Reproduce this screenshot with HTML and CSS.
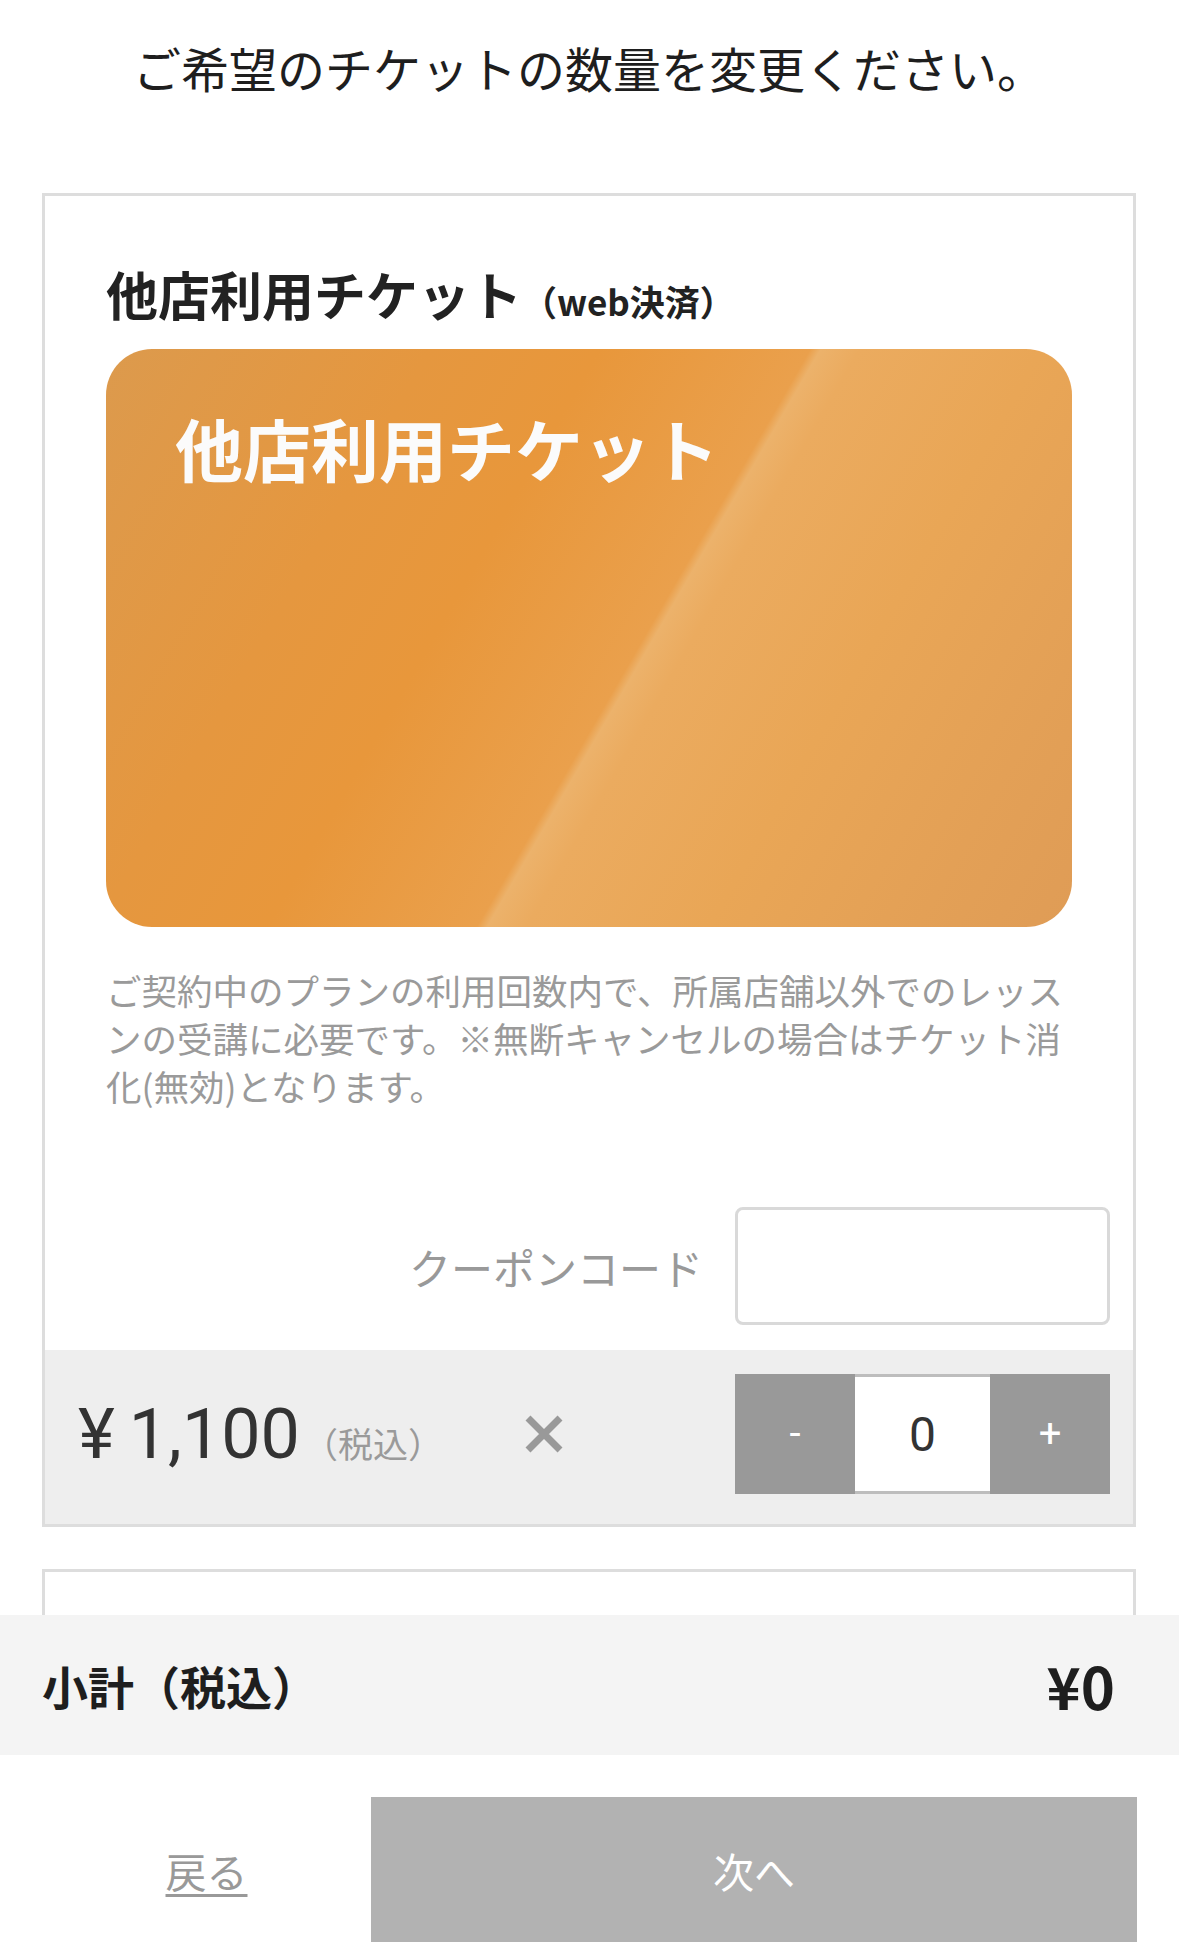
FILE: index.html
```html
<!DOCTYPE html>
<html lang="ja">
<head>
<meta charset="utf-8">
<title>チケット数量の変更</title>
<link rel="stylesheet" href="styles.css">
</head>
<body>
<main class="page">
  <p class="lead">ご希望のチケットの数量を変更ください。</p>

  <section class="ticket">
    <div class="ticket-body">
      <h2 class="ticket-title">他店利用チケット<span class="ticket-sub">（web決済）</span></h2>
      <div class="ticket-card">
        <span class="ticket-card-name">他店利用チケット</span>
      </div>
      <p class="ticket-desc">ご契約中のプランの利用回数内で、所属店舗以外でのレッスンの受講に必要です。※無断キャンセルの場合はチケット消化(無効)となります。</p>
    </div>
    <div class="coupon">
      <label class="coupon-label" for="coupon">クーポンコード</label>
      <input class="coupon-input" id="coupon" type="text">
    </div>
    <div class="price-row">
      <div class="price">
        <span class="price-yen">¥</span><span class="price-amount">1,100</span>
        <span class="price-tax">（税込）</span>
      </div>
      <svg class="times" width="38" height="38" viewBox="0 0 38 38" aria-hidden="true">
        <path d="M3 3 L35 35 M35 3 L3 35" stroke="#999" stroke-width="7" fill="none"/>
      </svg>
      <div class="stepper">
        <button class="step-btn" type="button">-</button>
        <span class="step-value">0</span>
        <button class="step-btn" type="button">+</button>
      </div>
    </div>
  </section>

  <section class="ticket ticket-next"></section>
</main>

<footer class="checkout">
  <div class="subtotal">
    <span class="subtotal-label">小計（税込）</span>
    <span class="subtotal-value">¥0</span>
  </div>
  <div class="actions">
    <a class="back-link" href="#">戻る</a>
    <button class="next-btn" type="button">次へ</button>
  </div>
</footer>
</body>
</html>
```

FILE: styles.css
```css
* {
  box-sizing: border-box;
}

html, body {
  margin: 0;
  padding: 0;
  background: #ffffff;
}

body {
  font-family: "Noto Sans CJK JP", "Noto Sans", sans-serif;
  color: #222222;
}

.page {
  padding: 0 43px 400px 42px;
}

.lead {
  margin: 0;
  padding-top: 34px;
  font-size: 48px;
  line-height: 66px;
  text-align: center;
  color: #1e1e1e;
}

.ticket {
  margin-top: 93px;
  border: 3px solid #dddddd;
  background: #ffffff;
}

.ticket-next {
  margin-top: 42px;
  height: 400px;
}

.ticket-body {
  padding: 62px 61px 97px 61px;
}

.ticket-title {
  margin: 0;
  font-size: 52px;
  line-height: 72px;
  font-weight: 700;
  color: #222222;
}

.ticket-sub {
  font-size: 35px;
  line-height: 1;
  font-weight: 700;
}

.ticket-card {
  margin-top: 19px;
  height: 578px;
  border-radius: 46px;
  padding: 58px 69px;
  background: linear-gradient(120deg,
    #dc9a4d 0%,
    #e5973f 25%,
    #e8973b 38%,
    #eaa04c 54.2%,
    #ecb26b 55%,
    #ebab5f 58%,
    #e9a656 72%,
    #e3a056 88%,
    #df9c56 100%);
}

.ticket-card-name {
  display: block;
  font-size: 68px;
  line-height: 82px;
  font-weight: 700;
  color: #fbfbfb;
}

.ticket-desc {
  margin: 39px 0 0;
  font-size: 35.5px;
  line-height: 48px;
  color: #9a9a9a;
}

.coupon {
  display: flex;
  justify-content: flex-end;
  align-items: center;
  gap: 32px;
  padding: 0 23px 25px 23px;
}

.coupon-label {
  font-size: 42px;
  color: #999999;
}

.coupon-input {
  width: 375px;
  height: 118px;
  border: 3px solid #d9d9d9;
  border-radius: 8px;
  background: #ffffff;
  font-size: 36px;
  outline: none;
}

.price-row {
  display: flex;
  align-items: center;
  height: 174px;
  padding: 0 23px 6px 33px;
  background: #eeeeee;
}

.price {
  display: flex;
  align-items: baseline;
}

.price-yen,
.price-amount {
  font-family: Roboto, "Noto Sans", sans-serif;
  font-size: 70px;
  line-height: 1;
  color: #333333;
}

.price-yen {
  margin-right: 14px;
}

.price-tax {
  margin-left: 3px;
  font-size: 35px;
  line-height: 1;
  color: #9a9a9a;
}

.times {
  display: block;
  margin-left: 82px;
}

.stepper {
  display: flex;
  margin-left: auto;
  height: 120px;
}

.step-btn {
  width: 120px;
  height: 120px;
  border: none;
  padding: 0;
  margin: 0;
  background: #999999;
  color: #ffffff;
  font-family: Roboto, "Noto Sans", sans-serif;
  font-size: 40px;
  line-height: 1;
}

.step-value {
  display: flex;
  align-items: center;
  justify-content: center;
  width: 135px;
  height: 120px;
  border-top: 3px solid #bdbdbd;
  border-bottom: 3px solid #bdbdbd;
  background: #ffffff;
  font-family: Roboto, "Noto Sans", sans-serif;
  font-size: 48px;
  color: #333333;
}

.checkout {
  position: fixed;
  left: 0;
  right: 0;
  bottom: 0;
  background: #ffffff;
}

.subtotal {
  display: flex;
  align-items: center;
  justify-content: space-between;
  height: 140px;
  padding: 0 64px 0 42px;
  background: #f4f4f4;
}

.subtotal-label {
  font-size: 46px;
  font-weight: 700;
  color: #1e1e1e;
}

.subtotal-value {
  font-size: 58px;
  font-weight: 700;
  color: #1e1e1e;
}

.actions {
  display: flex;
  padding: 42px 42px 0 42px;
}

.back-link {
  display: flex;
  align-items: center;
  justify-content: center;
  width: 329px;
  height: 145px;
  font-size: 41px;
  color: #999999;
  text-decoration: underline;
  text-underline-offset: 6px;
  text-decoration-thickness: 3px;
}

.next-btn {
  flex: 1;
  height: 145px;
  border: none;
  margin: 0;
  background: #b2b2b2;
  color: #ffffff;
  font-family: "Noto Sans CJK JP", sans-serif;
  font-size: 41px;
}
```
